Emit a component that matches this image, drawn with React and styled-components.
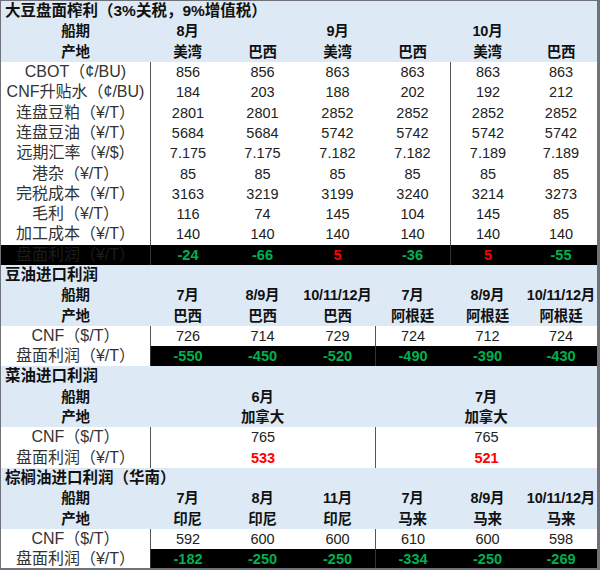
import React from 'react';
import styled, { createGlobalStyle, css } from 'styled-components';

const GlobalStyle = createGlobalStyle`
  html, body {
    margin: 0;
    padding: 0;
    background: #ffffff;
  }
  body {
    font-family: "Liberation Sans", "Noto Sans CJK SC", sans-serif;
    color: #222;
  }
`;

const colors = {
  head: '#dde9f5',
  line: '#555',
  frame: '#6f7278',
  green: '#00b050',
  red: '#ff0000',
};

const Frame = styled.div`
  width: 600px;
  height: 570px;
  box-sizing: border-box;
  border-top: 1px solid ${colors.frame};
  border-left: 1px solid ${colors.frame};
  border-right: 3px solid ${colors.frame};
  border-bottom: 2px solid ${colors.frame};
  display: flex;
  flex-direction: column;
  overflow: hidden;
`;

const Grid = styled.div`
  display: grid;
  grid-template-columns: 149px repeat(5, 75px) 1fr;
  grid-auto-rows: 20.3px;
`;

const Cell = styled.div`
  box-sizing: border-box;
  display: flex;
  align-items: center;
  justify-content: center;
  white-space: nowrap;
  line-height: 18px;
  grid-column: span ${(p) => p.$span || 1};
  ${(p) => p.$divider && css`border-left: 1px solid ${colors.line};`}
`;

const TitleCell = styled(Cell)`
  grid-column: 1 / -1;
  justify-content: flex-start;
  padding-left: 4px;
  background: ${colors.head};
  font-size: 15.5px;
  font-weight: 700;
  color: #111;
`;

const HeadCell = styled(Cell)`
  background: ${colors.head};
  font-size: 14.5px;
  font-weight: 700;
  letter-spacing: -0.2px;
  color: #111;
`;

const LabelCell = styled(Cell)`
  font-size: 16px;
  color: ${(p) => (p.$dark ? '#1c1c1c' : '#333')};
  background: ${(p) => (p.$dark ? '#000' : '#fff')};
`;

const ValueCell = styled(Cell)`
  font-size: 14.5px;
  background: ${(p) => (p.$dark ? '#000' : '#fff')};
  color: ${(p) => (p.$tone === 'green' ? colors.green : p.$tone === 'red' ? colors.red : '#222')};
  font-weight: ${(p) => (p.$tone ? 700 : 400)};
  ${(p) => p.$dark && p.$divider && css`border-left-color: #333;`}
`;

const tone = (v) => (String(v).startsWith('-') ? 'green' : 'red');

const sections = [
  {
    title: '大豆盘面榨利（3%关税，9%增值税）',
    dividers: [2, 6],
    ship: [{ t: '8月' }, { t: '' }, { t: '9月' }, { t: '' }, { t: '10月' }, { t: '' }],
    origin: ['美湾', '巴西', '美湾', '巴西', '美湾', '巴西'].map((t) => ({ t })),
    rows: [
      { label: 'CBOT（¢/BU)', values: [856, 856, 863, 863, 863, 863] },
      { label: 'CNF升贴水（¢/BU)', values: [184, 203, 188, 202, 192, 212] },
      { label: '连盘豆粕（¥/T）', values: [2801, 2801, 2852, 2852, 2852, 2852] },
      { label: '连盘豆油（¥/T）', values: [5684, 5684, 5742, 5742, 5742, 5742] },
      { label: '远期汇率（¥/$）', values: ['7.175', '7.175', '7.182', '7.182', '7.189', '7.189'] },
      { label: '港杂（¥/T）', values: [85, 85, 85, 85, 85, 85] },
      { label: '完税成本（¥/T）', values: [3163, 3219, 3199, 3240, 3214, 3273] },
      { label: '毛利（¥/T）', values: [116, 74, 145, 104, 145, 85] },
      { label: '加工成本（¥/T）', values: [140, 140, 140, 140, 140, 140] },
      { label: '盘面利润（¥/T）', values: [-24, -66, 5, -36, 5, -55], profit: true, darkLabel: true },
    ],
  },
  {
    title: '豆油进口利润',
    dividers: [2, 5],
    ship: ['7月', '8/9月', '10/11/12月', '7月', '8/9月', '10/11/12月'].map((t) => ({ t })),
    origin: ['巴西', '巴西', '巴西', '阿根廷', '阿根廷', '阿根廷'].map((t) => ({ t })),
    rows: [
      { label: 'CNF（$/T）', values: [726, 714, 729, 724, 712, 724] },
      { label: '盘面利润（¥/T）', values: [-550, -450, -520, -490, -390, -430], profit: true },
    ],
  },
  {
    title: '菜油进口利润',
    dividers: [2, 5],
    span: 3,
    ship: [{ t: '6月', s: 3 }, { t: '7月', s: 3 }],
    origin: [{ t: '加拿大', s: 3 }, { t: '加拿大', s: 3 }],
    rows: [
      { label: 'CNF（$/T）', values: [765, 765] },
      { label: '盘面利润（¥/T）', values: [533, 521], profit: true, light: true },
    ],
  },
  {
    title: '棕榈油进口利润（华南）',
    dividers: [2, 5],
    ship: ['7月', '8月', '11月', '7月', '8/9月', '10/11/12月'].map((t) => ({ t })),
    origin: ['印尼', '印尼', '印尼', '马来', '马来', '马来'].map((t) => ({ t })),
    rows: [
      { label: 'CNF（$/T）', values: [592, 600, 600, 610, 600, 598] },
      { label: '盘面利润（¥/T）', values: [-182, -250, -250, -334, -250, -269], profit: true },
    ],
  },
];

function HeadRow({ label, cells }) {
  return (
    <>
      <HeadCell>{label}</HeadCell>
      {cells.map((c, i) => (
        <HeadCell key={i} $span={c.s || 1}>
          {c.t}
        </HeadCell>
      ))}
    </>
  );
}

function DataRow({ row, dividers, span }) {
  const dark = row.profit && !row.light;
  let col = 2;
  return (
    <>
      <LabelCell $dark={row.darkLabel}>{row.label}</LabelCell>
      {row.values.map((v, i) => {
        const start = col;
        col += span;
        return (
          <ValueCell
            key={i}
            $span={span}
            $dark={dark}
            $divider={dividers.includes(start)}
            $tone={row.profit ? tone(v) : null}
          >
            {v}
          </ValueCell>
        );
      })}
    </>
  );
}

function Section({ data }) {
  return (
    <Grid>
      <TitleCell>{data.title}</TitleCell>
      <HeadRow label="船期" cells={data.ship} />
      <HeadRow label="产地" cells={data.origin} />
      {data.rows.map((row) => (
        <DataRow key={row.label} row={row} dividers={data.dividers} span={data.span || 1} />
      ))}
    </Grid>
  );
}

export default function App() {
  return (
    <>
      <GlobalStyle />
      <Frame>
        {sections.map((s) => (
          <Section key={s.title} data={s} />
        ))}
      </Frame>
    </>
  );
}
